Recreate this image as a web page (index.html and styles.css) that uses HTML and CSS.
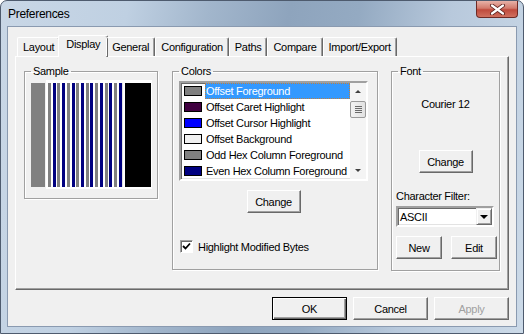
FILE: index.html
```html
<!DOCTYPE html>
<html>
<head>
	<meta charset="utf-8">
	<title>Preferences</title>
	<link rel="stylesheet" href="styles.css">
</head>
<body>
	<div class="window">
		<!-- title bar -->
		<div class="titlebar">
			<span class="title">Preferences</span>
			<div class="close">
				<svg width="17" height="11" viewBox="0 0 17 11">
					<path d="M3 1.5 L14 9.5 M14 1.5 L3 9.5" stroke="#5a1f1b" stroke-width="4" stroke-linecap="round"/>
					<path d="M3 1.5 L14 9.5 M14 1.5 L3 9.5" stroke="#ffffff" stroke-width="2.2" stroke-linecap="round"/>
				</svg>
			</div>
		</div>

		<div class="client">
			<div class="tabs">
				<div class="tab">Layout</div>
				<div class="tab active">Display</div>
				<div class="tab">General</div>
				<div class="tab">Configuration</div>
				<div class="tab">Paths</div>
				<div class="tab">Compare</div>
				<div class="tab">Import/Export</div>
			</div>

			<div class="panel">
				<!-- Sample -->
				<fieldset class="group sample">
					<legend>Sample</legend>
					<div class="sample-body">
						<div class="offset-bar"></div>
						<div class="sample-frame">
							<div class="hex">
								<i></i><i></i><i></i><i></i><i></i><i></i><i></i><i></i>
								<i></i><i></i><i></i><i></i><i></i><i></i><i></i><i></i>
							</div>
							<div class="ascii"></div>
						</div>
					</div>
				</fieldset>

				<!-- Colors -->
				<fieldset class="group colors">
					<legend>Colors</legend>
					<div class="colors-body">
						<div class="listbox">
							<ul class="items">
								<li class="selected"><span class="swatch" style="background:#808080"></span><span class="name">Offset Foreground</span></li>
								<li><span class="swatch" style="background:#400040"></span><span class="name">Offset Caret Highlight</span></li>
								<li><span class="swatch" style="background:#0000ff"></span><span class="name">Offset Cursor Highlight</span></li>
								<li><span class="swatch" style="background:#f0f0f0"></span><span class="name">Offset Background</span></li>
								<li><span class="swatch" style="background:#808080"></span><span class="name">Odd Hex Column Foreground</span></li>
								<li><span class="swatch" style="background:#000080"></span><span class="name">Even Hex Column Foreground</span></li>
							</ul>
							<div class="scrollbar">
								<div class="arrow up"></div>
								<div class="track"><div class="thumb"><b></b><b></b><b></b><b></b></div></div>
								<div class="arrow down"></div>
							</div>
						</div>
						<button class="btn">Change</button>
					</div>
					<label class="check"><span class="box">
						<svg width="9" height="9" viewBox="0 0 9 9"><path d="M1 4 L3.5 6.5 L8 1.5" fill="none" stroke="#000" stroke-width="1.8"/></svg>
					</span>Highlight Modified Bytes</label>
				</fieldset>

				<!-- Font -->
				<fieldset class="group font">
					<legend>Font</legend>
					<div class="font-name">Courier 12</div>
					<button class="btn font-change">Change</button>
					<div class="filter-label">Character Filter:</div>
					<div class="combo">
						<span class="combo-text">ASCII</span>
						<span class="drop"></span>
					</div>
					<div class="filter-buttons">
						<button class="btn">New</button>
						<button class="btn">Edit</button>
					</div>
				</fieldset>
			</div>

			<div class="footer">
				<button class="btn default">OK</button>
				<button class="btn">Cancel</button>
				<button class="btn" disabled>Apply</button>
			</div>
		</div>
	</div>
</body>
</html>
```

FILE: styles.css
```css
/* ---------- page ---------- */
body{
	margin: 0;
	font-family: "Liberation Sans", Arial, sans-serif;
	font-size: 11px;
	letter-spacing: -0.3px;
	color: #000;
}

/* ---------- window frame ---------- */
.window{
	width: 524px;
	height: 334px;
	box-sizing: border-box;
	border: 1px solid #4e5b6e;
	border-radius: 7px 7px 0 0;
	padding: 0 6px 6px 6px;
	background: linear-gradient(100deg, #c9d7e6 0%, #bfd0e2 22%, #a2b6cc 36%, #8ea4bd 50%, #94aac2 62%, #b8c9dc 78%, #ccdae8 100%);
	display: flex;
	flex-direction: column;
}

.titlebar{
	height: 25px;
	display: flex;
	justify-content: space-between;
	align-items: flex-start;
}

.title{
	font-size: 12px;
	margin: 6px 0 0 1px;
}

.close{
	width: 42px;
	height: 17px;
	box-sizing: border-box;
	margin-right: -1px;
	border: 1px solid #6e2a25;
	border-top: none;
	border-radius: 0 0 4px 4px;
	background: linear-gradient(#e7b2a8, #d27a6c 45%, #bf4a3c 55%, #d0705f);
	display: flex;
	align-items: center;
	justify-content: center;
}

/* ---------- client area ---------- */
.client{
	flex: 1;
	background: #f0f0f0;
	border: 1px solid #8a9ab0;
	padding: 8px 7px 0 7px;
}

/* tabs */
.tabs{
	display: flex;
	align-items: flex-end;
	height: 21px;
	padding-left: 2px;
	position: relative;
	z-index: 1;
}

.tab{
	height: 19px;
	box-sizing: border-box;
	padding: 0 5px;
	line-height: 18px;
	border: 1px solid;
	border-color: #fff #696969 transparent #fff;
	border-bottom: none;
	border-radius: 2px 2px 0 0;
	box-shadow: inset -1px 0 #a0a0a0;
}

.tab.active{
	height: 22px;
	margin: 0 -2px -1px -2px;
	padding: 0 7px;
	line-height: 17px;
	background: #f0f0f0;
}

.panel{
	height: 234px;
	box-sizing: border-box;
	border: 1px solid;
	border-color: #fff #696969 #696969 #fff;
	box-shadow: inset -1px -1px #a0a0a0;
	padding: 8px 0 0 8px;
	display: flex;
	align-items: flex-start;
}

/* group boxes */
.group{
	margin: 0;
	padding: 0;
	min-width: 0;
	box-sizing: border-box;
	border: 1px solid #a0a0a0;
	box-shadow: inset 1px 1px #fff, 1px 1px #fff;
}

.group legend{
	margin-left: 0;
	padding: 0 2px;
	line-height: 13px;
}

/* Sample */
.sample{
	width: 134px;
	height: 134px;
	padding: 2px 0 0 6px;
}

.sample-body{
	display: flex;
	align-items: center;
	gap: 1px;
}

.offset-bar{
	width: 14px;
	height: 104px;
	background: #808080;
}

.sample-frame{
	display: flex;
	background: #fff;
	padding: 3px 1px 2px 2px;
}

.hex{
	width: 74px;
	height: 104px;
	display: flex;
	justify-content: space-between;
	border-right: 1px solid #e3e3e3;
}

.hex i{
	width: 3px;
	background: #808080;
}

.hex i:nth-child(even){
	background: #000080;
}

.ascii{
	width: 26px;
	margin-left: 2px;
	background: #000;
}

/* Colors */
.colors{
	width: 206px;
	height: 205px;
	margin-left: 14px;
	padding: 3px 0 0 6px;
}

.colors-body{
	width: 189px;
	display: flex;
	flex-direction: column;
	align-items: center;
}

.listbox{
	align-self: stretch;
	height: 100px;
	box-sizing: border-box;
	border: 2px solid;
	border-color: #a0a0a0 #fff #fff #a0a0a0;
	box-shadow: inset 1px 1px #696969, inset -1px -1px #e3e3e3;
	background: #fff;
	display: flex;
}

.items{
	flex: 1;
	list-style: none;
	margin: 0;
	padding: 0;
}

.items li{
	display: flex;
	align-items: center;
	height: 16px;
	padding-left: 3px;
}

.swatch{
	width: 18px;
	height: 10px;
	box-sizing: border-box;
	border: 1px solid #000;
	margin-right: 3px;
}

.name{
	flex: 1;
	height: 16px;
	line-height: 16px;
	padding-left: 1px;
	white-space: nowrap;
	overflow: hidden;
}

.selected .name{
	background: #3399ff;
	color: #fff;
	outline: 1px dotted #c08040;
	outline-offset: -1px;
}

.scrollbar{
	width: 16px;
	display: flex;
	flex-direction: column;
	background: #f4f4f4;
}

.arrow{
	height: 17px;
	display: flex;
	align-items: center;
	justify-content: center;
}

.arrow::before{
	content: "";
	border-left: 3px solid transparent;
	border-right: 3px solid transparent;
}

.arrow.up::before{
	border-bottom: 3px solid #404040;
}

.arrow.down::before{
	border-top: 3px solid #404040;
}

.track{
	flex: 1;
}

.thumb{
	height: 17px;
	box-sizing: border-box;
	margin: 1px 0 0 0;
	border: 1px solid #9a9a9a;
	border-radius: 2px;
	background: linear-gradient(90deg, #f2f2f2, #e2e2e2);
	display: flex;
	flex-direction: column;
	align-items: center;
	justify-content: center;
	gap: 1px;
}

.thumb b{
	width: 7px;
	height: 1px;
	background: #6a6a6a;
}

/* buttons */
.btn{
	font: inherit;
	letter-spacing: inherit;
	color: #000;
	width: 54px;
	height: 23px;
	padding: 0;
	box-sizing: border-box;
	background: #f0f0f0;
	border: 1px solid;
	border-color: #fff #696969 #696969 #fff;
	box-shadow: inset -1px -1px #a0a0a0;
	border-radius: 0;
}

.colors-body .btn{
	margin-top: 9px;
}

.check{
	display: flex;
	align-items: center;
	margin: 27px 0 0 1px;
}

.box{
	width: 13px;
	height: 13px;
	box-sizing: border-box;
	border: 1px solid;
	border-color: #a0a0a0 #fff #fff #a0a0a0;
	box-shadow: inset 1px 1px #696969;
	background: #fff;
	display: flex;
	align-items: center;
	justify-content: center;
	margin-right: 5px;
}

/* Font */
.font{
	width: 109px;
	height: 206px;
	margin-left: 13px;
	padding: 0 0 0 4px;
	display: flex;
	flex-direction: column;
	align-items: flex-start;
}

.font legend{
	margin-left: 2px;
}

.font-name{
	align-self: center;
	margin: 20px 0 0 -4px;
}

.font-change{
	align-self: center;
	margin: 40px 0 0 -4px;
}

.filter-label{
	margin-top: 17px;
}

.combo{
	width: 98px;
	height: 21px;
	box-sizing: border-box;
	margin-top: 4px;
	border: 2px solid;
	border-color: #a0a0a0 #fff #fff #a0a0a0;
	box-shadow: inset 1px 1px #696969, inset -1px -1px #e3e3e3;
	background: #fff;
	display: flex;
	align-items: center;
}

.combo-text{
	flex: 1;
	padding-left: 2px;
}

.drop{
	width: 16px;
	height: 17px;
	box-sizing: border-box;
	background: #f0f0f0;
	border: 1px solid;
	border-color: #f0f0f0 #696969 #696969 #f0f0f0;
	box-shadow: inset 1px 1px #fff, inset -1px -1px #a0a0a0;
	display: flex;
	align-items: center;
	justify-content: center;
}

.drop::before{
	content: "";
	border-left: 4px solid transparent;
	border-right: 4px solid transparent;
	border-top: 4px solid #000;
}

.filter-buttons{
	display: flex;
	gap: 9px;
	margin-top: 9px;
}

.filter-buttons .btn{
	width: 46px;
}

/* bottom buttons */
.footer{
	display: flex;
	justify-content: flex-end;
	gap: 6px;
	margin-top: 7px;
}

.footer .btn{
	width: 75px;
}

.btn.default{
	border-color: #000;
	box-shadow: inset 1px 1px #fff, inset -1px -1px #696969, inset -2px -2px #a0a0a0;
}

.btn:disabled{
	color: #a0a0a0;
}
```
